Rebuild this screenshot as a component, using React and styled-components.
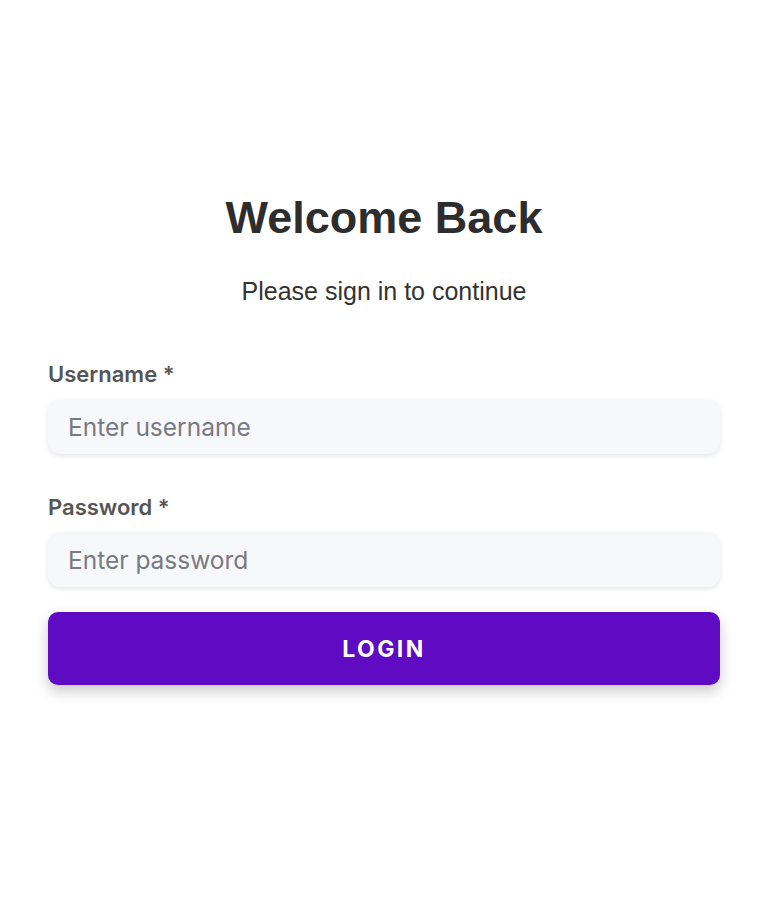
import React from "react";
import styled, { createGlobalStyle } from "styled-components";

const Global = createGlobalStyle`
  html, body { margin: 0; padding: 0; background: #ffffff; }
  * { box-sizing: border-box; }
`;

const Page = styled.div`
  min-height: 917px;
  display: flex;
  justify-content: center;
  padding: 188px 48px 0;
`;

const Card = styled.form`
  width: 100%;
  max-width: 672px;
  display: flex;
  flex-direction: column;
`;

const Title = styled.h1`
  margin: 0;
  text-align: center;
  font-family: "Liberation Sans", Arial, sans-serif;
  font-weight: 700;
  font-size: 45px;
  line-height: 60px;
  letter-spacing: 0;
  color: #2d2d2d;
`;

const Subtitle = styled.p`
  margin: 27px 0 0;
  text-align: center;
  font-family: "Liberation Sans", Arial, sans-serif;
  font-size: 25px;
  line-height: 32px;
  color: #333333;
`;

const Field = styled.div`
  display: flex;
  flex-direction: column;
  gap: 11px;
  margin-top: ${(p) => p.$top}px;
`;

const Label = styled.label`
  font-family: Inter, "Noto Sans", sans-serif;
  font-weight: 600;
  font-size: 22px;
  line-height: 27px;
  color: #555555;
`;

const Input = styled.input`
  height: 55px;
  width: 100%;
  border: none;
  outline: none;
  border-radius: 12px;
  background: #f7f8fc;
  box-shadow: 0 2px 5px rgba(0, 0, 0, 0.1);
  padding: 0 20px;
  font-family: Inter, "Noto Sans", sans-serif;
  font-size: 24.5px;
  color: #333;
  &::placeholder { color: #7a7a80; }
`;

const Button = styled.button`
  margin-top: 25px;
  height: 73px;
  width: 100%;
  border: none;
  border-radius: 10px;
  background: #5f0ac3;
  box-shadow: 0 6px 14px rgba(0, 0, 0, 0.22);
  color: #ffffff;
  font-family: Inter, "Noto Sans", sans-serif;
  font-weight: 700;
  font-size: 23px;
  letter-spacing: 2.4px;
  cursor: pointer;
`;

export default function App() {
  return (
    <>
      <Global />
      <Page>
        <Card onSubmit={(e) => e.preventDefault()}>
          <Title>Welcome Back</Title>
          <Subtitle>Please sign in to continue</Subtitle>
          <Field $top={54}>
            <Label htmlFor="u">Username *</Label>
            <Input id="u" placeholder="Enter username" />
          </Field>
          <Field $top={40}>
            <Label htmlFor="p">Password *</Label>
            <Input id="p" type="password" placeholder="Enter password" />
          </Field>
          <Button type="submit">LOGIN</Button>
        </Card>
      </Page>
    </>
  );
}
